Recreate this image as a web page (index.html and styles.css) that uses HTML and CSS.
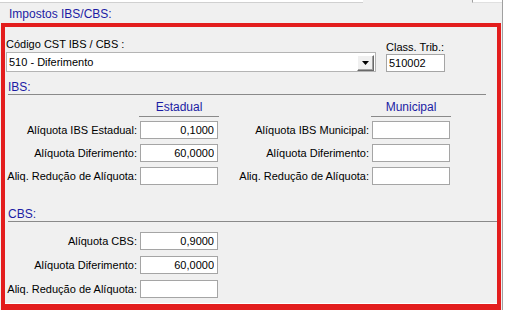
FILE: index.html
```html
<!DOCTYPE html>
<html lang="pt-BR">
<head>
  <meta charset="UTF-8">
  <title>Impostos IBS/CBS</title>
  <link rel="stylesheet" href="styles.css">
</head>
<body>
  <div class="page">
    <!-- bottom edge of the controls above -->
    <div class="topstrip">
      <span class="strip-left"></span>
      <span class="strip-gap"></span>
      <span class="strip-right"></span>
    </div>

    <div class="group-title">Impostos IBS/CBS:</div>

    <div class="highlight">
      <div class="group-body">
        <div class="cst-row">
          <div class="field field-cst">
            <label class="field-label">Código CST IBS / CBS :</label>
            <div class="combo">
              <span class="combo-text">510 - Diferimento</span>
              <span class="combo-btn">
                <svg width="7" height="4" viewBox="0 0 7 4"><path d="M0 0h7L3.5 4z" fill="#000"/></svg>
              </span>
            </div>
          </div>
          <div class="field field-class">
            <label class="field-label label-class">Class. Trib.:</label>
            <input class="edit edit-class" type="text" value="510002">
          </div>
        </div>

        <!-- IBS -->
        <div class="section-title section-ibs">IBS:</div>
        <div class="rates">
          <span></span>
          <div class="col-head">Estadual</div>
          <span></span>
          <div class="col-head">Municipal</div>

          <label>Alíquota IBS Estadual:</label>
          <input class="edit num" type="text" value="0,1000">
          <label>Alíquota IBS Municipal:</label>
          <input class="edit num" type="text" value="">

          <label>Alíquota Diferimento:</label>
          <input class="edit num" type="text" value="60,0000">
          <label>Alíquota Diferimento:</label>
          <input class="edit num" type="text" value="">

          <label>Aliq. Redução de Alíquota:</label>
          <input class="edit num" type="text" value="">
          <label>Aliq. Redução de Alíquota:</label>
          <input class="edit num" type="text" value="">
        </div>

        <!-- CBS -->
        <div class="section-title section-cbs">CBS:</div>
        <div class="rates rates-cbs">
          <label>Alíquota CBS:</label>
          <input class="edit num" type="text" value="0,9000">

          <label>Alíquota Diferimento:</label>
          <input class="edit num" type="text" value="60,0000">

          <label>Aliq. Redução de Alíquota:</label>
          <input class="edit num" type="text" value="">
        </div>
      </div>
    </div>
  </div>
</body>
</html>
```

FILE: styles.css
```css
* { box-sizing: border-box; }

body {
  margin: 0;
  background: #fff;
  font-family: 'Liberation Sans', Arial, sans-serif;
  font-size: 11px;
  color: #000;
}

.page {
  width: 503px;
  height: 310px;
  background: #f0f0f0;
  border-right: 1px solid #a0a0a0;
  overflow: hidden;
}

/* strip at the very top */
.topstrip {
  display: flex;
  height: 3px;
}
.strip-left {
  width: 363px;
  background: #fff;
  border-bottom: 1px solid #d0d0d0;
}
.strip-gap { width: 109px; }
.strip-right {
  flex: 1;
  background: #fff;
  border-left: 1px solid #a0a0a0;
  border-bottom: 1px solid #e0e0e0;
}

.group-title {
  padding: 2px 0 0 9px;
  height: 20px;
  line-height: 18px;
  font-size: 12px;
  color: #1c1ca4;
}

/* red annotation frame */
.highlight {
  margin-left: 1px;
  width: 500px;
  height: 287px;
  border: 4px solid #e31d1d;
  border-bottom-width: 6px;
}

.group-body {
  height: 100%;
  padding-top: 10px;
  border-bottom: 1px solid #fff;
}

.cst-row {
  display: flex;
  align-items: flex-end;
}

.field {
  display: flex;
  flex-direction: column;
}
.field-cst {
  margin-left: 1px;
  width: 370px;
}
.field-class { margin-left: 10px; }

.field-label {
  line-height: 14px;
  margin-bottom: 1px;
}
.label-class {
  line-height: 13px;
  margin-bottom: 0;
}

.combo {
  display: flex;
  align-items: center;
  height: 20px;
  background: #fff;
  border: 1px solid #b4b4b4;
  padding: 0 1px 0 2px;
}
.combo-text { flex: 1; }
.combo-btn {
  display: flex;
  align-items: center;
  justify-content: center;
  width: 17px;
  height: 16px;
  margin-top: 2px;
  background: #f0f0f0;
  border: 1px solid;
  border-color: #fff #696969 #696969 #fff;
  box-shadow: inset -1px -1px #a0a0a0;
}

.edit {
  height: 18px;
  margin: 0;
  padding: 0 3px 0 2px;
  border: 1px solid #a5a5a5;
  background: #fff;
  font-family: inherit;
  font-size: 11px;
  color: #000;
  outline: none;
}
.edit-class { width: 59px; }
.num { text-align: right; }

.section-title {
  margin-left: 3px;
  line-height: 14px;
  font-size: 12px;
  color: #1c1ca4;
  border-bottom: 1px solid #8a8a8a;
}
.section-ibs {
  margin-top: 8px;
  margin-right: 11px;
}
.section-cbs {
  margin-top: 22px;
}

.rates {
  display: grid;
  grid-template-columns: 132px 78px 148px 78px;
  column-gap: 3px;
  row-gap: 5px;
  align-items: center;
  margin-top: 6px;
}
.rates label {
  text-align: right;
  white-space: nowrap;
}
.rates-cbs {
  margin-top: 10px;
  row-gap: 6px;
  grid-template-columns: 132px 78px;
}

.col-head {
  margin: 0 -1px -1px;
  padding-bottom: 2px;
  line-height: 13px;
  font-size: 12px;
  text-align: center;
  color: #1c1ca4;
  border-bottom: 1px solid #8a8a8a;
}
```
